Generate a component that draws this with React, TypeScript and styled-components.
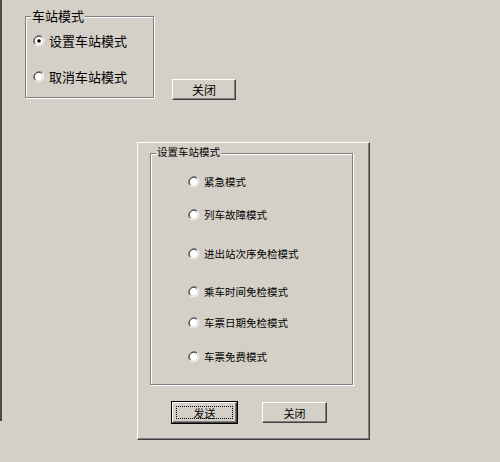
import { FC, type ReactElement } from "react"
import styled, { createGlobalStyle } from "styled-components"

const GlobalStyle = createGlobalStyle`
  html, body {
    margin: 0;
    padding: 0;
    background: #d4d0c8;
  }
  body {
    font-family: "Noto Sans CJK SC", "Liberation Sans", sans-serif;
    color: #000;
  }
`

const Page = styled.div`
  position: relative;
  width: 500px;
  height: 462px;
  box-sizing: border-box;
  padding-top: 16px;
  padding-left: 25px;
  background: #d4d0c8;
  overflow: hidden;

  &::before {
    content: "";
    position: absolute;
    left: 0;
    top: 0;
    width: 2px;
    height: 421px;
    background: #4a4a4a;
  }
`

const TopRow = styled.div`
  display: flex;
  align-items: flex-start;
`

const GroupBox = styled.div<{ $w: number; $h: number }>`
  position: relative;
  box-sizing: border-box;
  width: ${(p) => p.$w}px;
  height: ${(p) => p.$h}px;
  border: 1px solid #808080;
  box-shadow: inset 1px 1px 0 #fff, 1px 1px 0 #fff;
`

const Caption = styled.span<{ $size: number }>`
  position: absolute;
  top: ${(p) => -Math.round(p.$size * 0.72)}px;
  left: 5px;
  padding: 0 1px;
  background: #d4d0c8;
  font-size: ${(p) => p.$size}px;
  line-height: ${(p) => p.$size + 2}px;
  white-space: nowrap;
`

const OptionList = styled.div<{ $padTop: number; $padLeft: number }>`
  display: flex;
  flex-direction: column;
  padding-top: ${(p) => p.$padTop}px;
  padding-left: ${(p) => p.$padLeft}px;
`

const OptionRow = styled.label<{ $gap: number; $size: number }>`
  display: flex;
  align-items: center;
  gap: 4px;
  height: 14px;
  margin-top: ${(p) => p.$gap}px;
  font-size: ${(p) => p.$size}px;
  line-height: 14px;
  white-space: nowrap;
`

const Button = styled.div<{ $size: number; $w: number; $default?: boolean }>`
  position: relative;
  box-sizing: border-box;
  width: ${(p) => p.$w}px;
  height: 21px;
  display: flex;
  align-items: center;
  justify-content: center;
  font-size: ${(p) => p.$size}px;
  background: #d4d0c8;
  border-top: 1px solid #fff;
  border-left: 1px solid #fff;
  border-right: 1px solid #404040;
  border-bottom: 1px solid #404040;
  box-shadow: inset -1px -1px 0 #808080;
  outline: ${(p) => (p.$default ? "1px solid #000" : "none")};
  outline-offset: 0;

  ${(p) =>
    p.$default &&
    `
    &::after {
      content: "";
      position: absolute;
      inset: 3px;
      border: 1px dotted #000;
    }
  `}
`

const TopButton = styled(Button)`
  margin-top: 63px;
  margin-left: 18px;
`

const Panel = styled.div`
  box-sizing: border-box;
  width: 233px;
  height: 298px;
  margin-top: 42px;
  margin-left: 112px;
  padding: 10px 0 0 12px;
  border-top: 1px solid #fff;
  border-left: 1px solid #fff;
  border-right: 1px solid #404040;
  border-bottom: 1px solid #404040;
  box-shadow: inset -1px -1px 0 #808080;
`

const ButtonRow = styled.div`
  display: flex;
  gap: 25px;
  margin-top: 17px;
  padding-left: 22px;
`

const Radio: FC<{ checked?: boolean }> = ({ checked }): ReactElement => (
  <svg width="12" height="12" viewBox="0 0 12 12">
    <circle cx="6" cy="6" r="5" fill="#fff" />
    <path d="M1.8 9.5 A5.5 5.5 0 0 1 9.5 1.8" fill="none" stroke="#808080" strokeWidth="1" />
    <path d="M2.6 8.8 A4.3 4.3 0 0 1 8.8 2.6" fill="none" stroke="#404040" strokeWidth="1" />
    <path d="M9.5 1.8 A5.5 5.5 0 0 1 1.8 9.5" fill="none" stroke="#fff" strokeWidth="1" />
    <path d="M8.8 2.6 A4.3 4.3 0 0 1 2.6 8.8" fill="none" stroke="#d4d0c8" strokeWidth="1" />
    {checked && <circle cx="6" cy="6" r="1.8" fill="#000" />}
  </svg>
)

const stationModes = [
  { text: "设置车站模式", checked: true, gap: 0 },
  { text: "取消车站模式", checked: false, gap: 22 },
]

const setModes = [
  { text: "紧急模式", gap: 0 },
  { text: "列车故障模式", gap: 19 },
  { text: "进出站次序免检模式", gap: 25 },
  { text: "乘车时间免检模式", gap: 24 },
  { text: "车票日期免检模式", gap: 17 },
  { text: "车票免费模式", gap: 20 },
]

const App: FC = (): ReactElement => {
  return (
    <Page>
      <GlobalStyle />
      <TopRow>
        <GroupBox $w={129} $h={82}>
          <Caption $size={13}>车站模式</Caption>
          <OptionList $padTop={17} $padLeft={7}>
            {stationModes.map((m) => (
              <OptionRow key={m.text} $gap={m.gap} $size={13}>
                <Radio checked={m.checked} />
                {m.text}
              </OptionRow>
            ))}
          </OptionList>
        </GroupBox>
        <TopButton $size={12} $w={64}>
          关闭
        </TopButton>
      </TopRow>
      <Panel>
        <GroupBox $w={203} $h={232}>
          <Caption $size={10.5}>设置车站模式</Caption>
          <OptionList $padTop={21} $padLeft={37}>
            {setModes.map((m) => (
              <OptionRow key={m.text} $gap={m.gap} $size={10.5}>
                <Radio />
                {m.text}
              </OptionRow>
            ))}
          </OptionList>
        </GroupBox>
        <ButtonRow>
          <Button $size={11} $w={65} $default>
            发送
          </Button>
          <Button $size={11} $w={65}>
            关闭
          </Button>
        </ButtonRow>
      </Panel>
    </Page>
  )
}

export default App
